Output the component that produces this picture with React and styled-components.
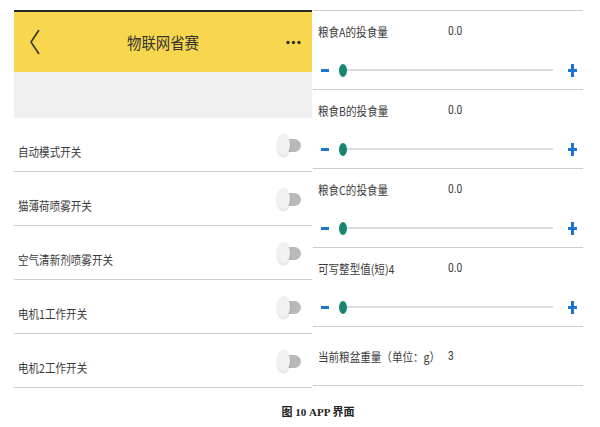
import React from 'react';
import styled, { createGlobalStyle } from 'styled-components';

const GlobalStyle = createGlobalStyle`
  body {
    margin: 0;
    background: #fff;
    font-family: "Noto Sans CJK SC", "Noto Sans", sans-serif;
  }
`;

const Page = styled.div`
  width: 600px;
  height: 427px;
  overflow: hidden;
`;

const Panels = styled.div`
  display: flex;
  padding: 10px 0 0 14px;
  gap: 1px;
`;

const LeftPanel = styled.div`
  width: 298px;
  border-top: 2px solid #2a2a2a;
`;

const Header = styled.div`
  height: 60px;
  background: #f8d64e;
  display: flex;
  align-items: center;
  justify-content: space-between;
  padding: 0 11px 0 15px;
`;

const Title = styled.div`
  font-size: 16px;
  color: #333;
  transform: scaleX(0.9);
`;

const Band = styled.div`
  height: 46px;
  background: #efefef;
`;

const SwitchRow = styled.div`
  height: 53px;
  border-bottom: 1px solid #cfcfcf;
  display: flex;
  align-items: center;
  justify-content: space-between;
  padding: 0 11px 0 4px;
`;

const RowLabel = styled.div`
  font-size: 12px;
  color: #3a3a3a;
  padding-top: 14px;
  transform: scaleX(0.88);
  transform-origin: left center;
`;

const Switch = styled.div`
  position: relative;
  width: 24px;
  height: 22px;
`;

const Track = styled.div`
  position: absolute;
  right: 0;
  top: 5px;
  width: 17px;
  height: 13px;
  border-radius: 0 7px 7px 0;
  background: #b9b9b9;
`;

const Thumb = styled.div`
  position: absolute;
  left: 0;
  top: 0;
  width: 13px;
  height: 22px;
  border-radius: 50%;
  background: #f1f1f1;
  box-shadow: 0 1px 2px rgba(0, 0, 0, 0.2);
`;

const RightPanel = styled.div`
  width: 270px;
  border-top: 1px solid #cfcfcf;
`;

const Block = styled.div`
  border-bottom: 1px solid #cfcfcf;
`;

const InfoRow = styled.div`
  height: ${(p) => p.$h}px;
  display: flex;
  align-items: center;
  padding-left: 5px;
  font-size: 12px;
  color: #3a3a3a;
`;

const InfoLabel = styled.div`
  width: 130px;
  transform: scaleX(0.88);
  transform-origin: left center;
  white-space: nowrap;
`;

const InfoValue = styled.div`
  font-family: Roboto, "Noto Sans", sans-serif;
  transform: scaleX(0.85);
  transform-origin: left center;
`;

const SliderRow = styled.div`
  height: 38px;
  display: flex;
  align-items: center;
  padding: 0 6px 0 8px;
`;

const Minus = styled.div`
  width: 8px;
  height: 3px;
  background: #1b74d6;
  margin-right: 10px;
`;

const SliderThumb = styled.div`
  width: 8px;
  height: 13px;
  border-radius: 50%;
  background: #16876f;
`;

const SliderTrack = styled.div`
  flex: 1;
  height: 2px;
  background: #dcdcdc;
  margin-right: 15px;
`;

const Caption = styled.div`
  text-align: center;
  font-family: "Liberation Serif", "Noto Sans CJK SC", serif;
  font-weight: bold;
  font-size: 11px;
  color: #222;
  padding: 15px 0 0 36px;
`;

const BackIcon = () => (
  <svg width="12" height="28" viewBox="0 0 12 28">
    <path d="M10 2 L2 14 L10 26" fill="none" stroke="#333" strokeWidth="1.6" />
  </svg>
);

const MoreIcon = () => (
  <svg width="15" height="5" viewBox="0 0 15 5">
    <circle cx="2" cy="2.5" r="1.7" fill="#333" />
    <circle cx="7.5" cy="2.5" r="1.7" fill="#333" />
    <circle cx="13" cy="2.5" r="1.7" fill="#333" />
  </svg>
);

const PlusIcon = () => (
  <svg width="9" height="13" viewBox="0 0 9 13">
    <rect x="3" y="0" width="3" height="13" fill="#1b74d6" />
    <rect x="0" y="5" width="9" height="3" fill="#1b74d6" />
  </svg>
);

const switches = ['自动模式开关', '猫薄荷喷雾开关', '空气清新剂喷雾开关', '电机1工作开关', '电机2工作开关'];
const sliders = ['粮食A的投食量', '粮食B的投食量', '粮食C的投食量', '可写整型值(短)4'];

export default function App() {
  return (
    <Page>
      <GlobalStyle />
      <Panels>
        <LeftPanel>
          <Header>
            <BackIcon />
            <Title>物联网省赛</Title>
            <MoreIcon />
          </Header>
          <Band />
          {switches.map((s) => (
            <SwitchRow key={s}>
              <RowLabel>{s}</RowLabel>
              <Switch>
                <Track />
                <Thumb />
              </Switch>
            </SwitchRow>
          ))}
        </LeftPanel>
        <RightPanel>
          {sliders.map((s) => (
            <Block key={s}>
              <InfoRow $h={40}>
                <InfoLabel>{s}</InfoLabel>
                <InfoValue>0.0</InfoValue>
              </InfoRow>
              <SliderRow>
                <Minus />
                <SliderThumb />
                <SliderTrack />
                <PlusIcon />
              </SliderRow>
            </Block>
          ))}
          <Block>
            <InfoRow $h={58}>
              <InfoLabel>当前粮盆重量（单位：g）</InfoLabel>
              <InfoValue>3</InfoValue>
            </InfoRow>
          </Block>
        </RightPanel>
      </Panels>
      <Caption>图 10 APP 界面</Caption>
    </Page>
  );
}
